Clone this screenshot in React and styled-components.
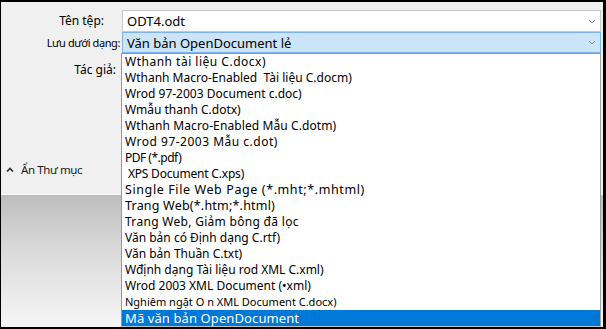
import React from "react";
import styled, { createGlobalStyle } from "styled-components";

const GlobalStyle = createGlobalStyle`
  html, body {
    margin: 0;
    padding: 0;
    background: #f0f0f0;
  }
  * {
    box-sizing: border-box;
  }
`;

// size in px, spacing = letter-spacing in px (the source mixes fonts)
const formats = [
  { label: "Wthanh tài liệu C.docx)", size: 12, spacing: 0.5 },
  { label: "Wthanh Macro-Enabled  Tài liệu C.docm)", size: 12 },
  { label: "Wrod 97-2003 Document c.doc)", size: 12 },
  { label: "Wmẫu thanh C.dotx)", size: 12 },
  { label: "Wthanh Macro-Enabled Mẫu C.dotm)", size: 12, spacing: 0.1 },
  { label: "Wrod 97-2003 Mẫu c.dot)", size: 12, spacing: 0.5 },
  { label: "PDF (*.pdf)", size: 12, spacing: -0.5 },
  { label: " XPS Document C.xps)", size: 12, spacing: -0.2 },
  { label: "Single File Web Page (*.mht;*.mhtml)", size: 12.5, spacing: 0.6 },
  { label: "Trang Web(*.htm;*.html)", size: 12.5, spacing: 0.2 },
  { label: "Trang Web, Giảm bông đã lọc", size: 12, spacing: 0.3 },
  { label: "Văn bản có Định dạng C.rtf)", size: 12 },
  { label: "Văn bản Thuần C.txt)", size: 12 },
  { label: "Wđịnh dạng Tài liệu rod XML C.xml)", size: 12 },
  { label: "Wrod 2003 XML Document (•xml)", size: 12 },
  { label: "Nghiêm ngặt O n XML Document C.docx)", size: 11 },
  { label: "Mã văn bản OpenDocument", size: 13, spacing: 0.1, selected: true },
];

function Chevron({ up }) {
  return (
    <svg width="8" height="5" viewBox="0 0 8 5">
      <polyline
        points={up ? "1,4.5 4,1.5 7,4.5" : "1,1 4,4 7,1"}
        fill="none"
        stroke="currentColor"
        strokeWidth={up ? 1.7 : 1}
      />
    </svg>
  );
}

export default function App() {
  return (
    <>
      <GlobalStyle />
      <Frame>
        <Form>
          <Label $inset={18} $size={12}>Tên tệp:</Label>
          <Field>
            <FieldText>ODT4.odt</FieldText>
            <Arrow>
              <Chevron />
            </Arrow>
          </Field>

          <Label $inset={2} $size={11} $spacing={-0.4}>
            Lưu dưới dạng:
          </Label>
          <SelectWrap>
            <Field $active>
              <FieldText>Văn bản OpenDocument lẻ</FieldText>
              <Arrow>
                <Chevron />
              </Arrow>
            </Field>
            <List>
              {formats.map((f) => (
                <Item
                  key={f.label}
                  $size={f.size}
                  $spacing={f.spacing}
                  $selected={f.selected}
                >
                  {f.label}
                </Item>
              ))}
            </List>
          </SelectWrap>

          <Label $inset={6} $size={12} $top={8}>Tác giả:</Label>
          <div />
        </Form>

        <FolderToggle>
          <ToggleIcon>
            <Chevron up />
          </ToggleIcon>
          Ẩn Thư mục
        </FolderToggle>

        <Footer />
      </Frame>
    </>
  );
}

const Frame = styled.div`
  width: 606px;
  height: 329px;
  display: flex;
  flex-direction: column;
  background: #f0f0f0;
  border-style: solid;
  border-color: #000;
  border-width: 2px 3px 2px 1px;
  font-family: "Noto Sans", "Liberation Sans", sans-serif;
  color: #000;
`;

const Form = styled.div`
  display: grid;
  grid-template-columns: 121px 1fr;
  grid-template-rows: 22px 21px 27px;
  padding: 8px 2px 0 0;
`;

const Label = styled.div`
  text-align: right;
  padding-right: ${(p) => p.$inset}px;
  padding-top: ${(p) => p.$top || 0}px;
  font-size: ${(p) => p.$size}px;
  letter-spacing: ${(p) => p.$spacing || 0}px;
  line-height: ${(p) => (p.$top ? "18px" : "21px")};
  white-space: nowrap;
`;

const Field = styled.div`
  height: ${(p) => (p.$active ? "21px" : "22px")};
  display: flex;
  align-items: center;
  justify-content: space-between;
  padding: 0 4px 0 4px;
  background: ${(p) => (p.$active ? "#cce4f7" : "#fff")};
  border: 1px solid ${(p) => (p.$active ? "#7eb4ea" : "#c8c8c8")};
`;

const FieldText = styled.span`
  font-size: 13px;
  white-space: nowrap;
`;

const Arrow = styled.span`
  display: flex;
  color: #8a8a8a;
`;

const SelectWrap = styled.div`
  position: relative;
`;

const List = styled.ul`
  position: absolute;
  top: 100%;
  left: -1px;
  right: 0;
  margin: 0;
  padding: 0;
  list-style: none;
  background: #fff;
  border: 1px solid #7f9db9;
  border-right-color: #a0a0a0;
  border-bottom-color: #c0c0c0;
  z-index: 2;
`;

const Item = styled.li`
  height: 16px;
  line-height: 16px;
  padding-left: 3px;
  font-size: ${(p) => p.$size}px;
  letter-spacing: ${(p) => p.$spacing || 0}px;
  white-space: pre;
  overflow: hidden;
  background: ${(p) => (p.$selected ? "#0078d7" : "transparent")};
  color: ${(p) => (p.$selected ? "#fff" : "#000")};
`;

const FolderToggle = styled.div`
  margin-top: 81px;
  height: 16px;
  display: flex;
  align-items: center;
  gap: 7px;
  padding-left: 5px;
  font-size: 11.5px;
  letter-spacing: -0.4px;
  color: #1a1a1a;
`;

const ToggleIcon = styled.span`
  display: flex;
  color: #333;
`;

const Footer = styled.div`
  flex: 1;
  margin-top: 17px;
  border-top: 1px solid #fafafa;
  background: linear-gradient(#bdbdbd, #d9d9d9 40%, #f6f6f6);
`;
